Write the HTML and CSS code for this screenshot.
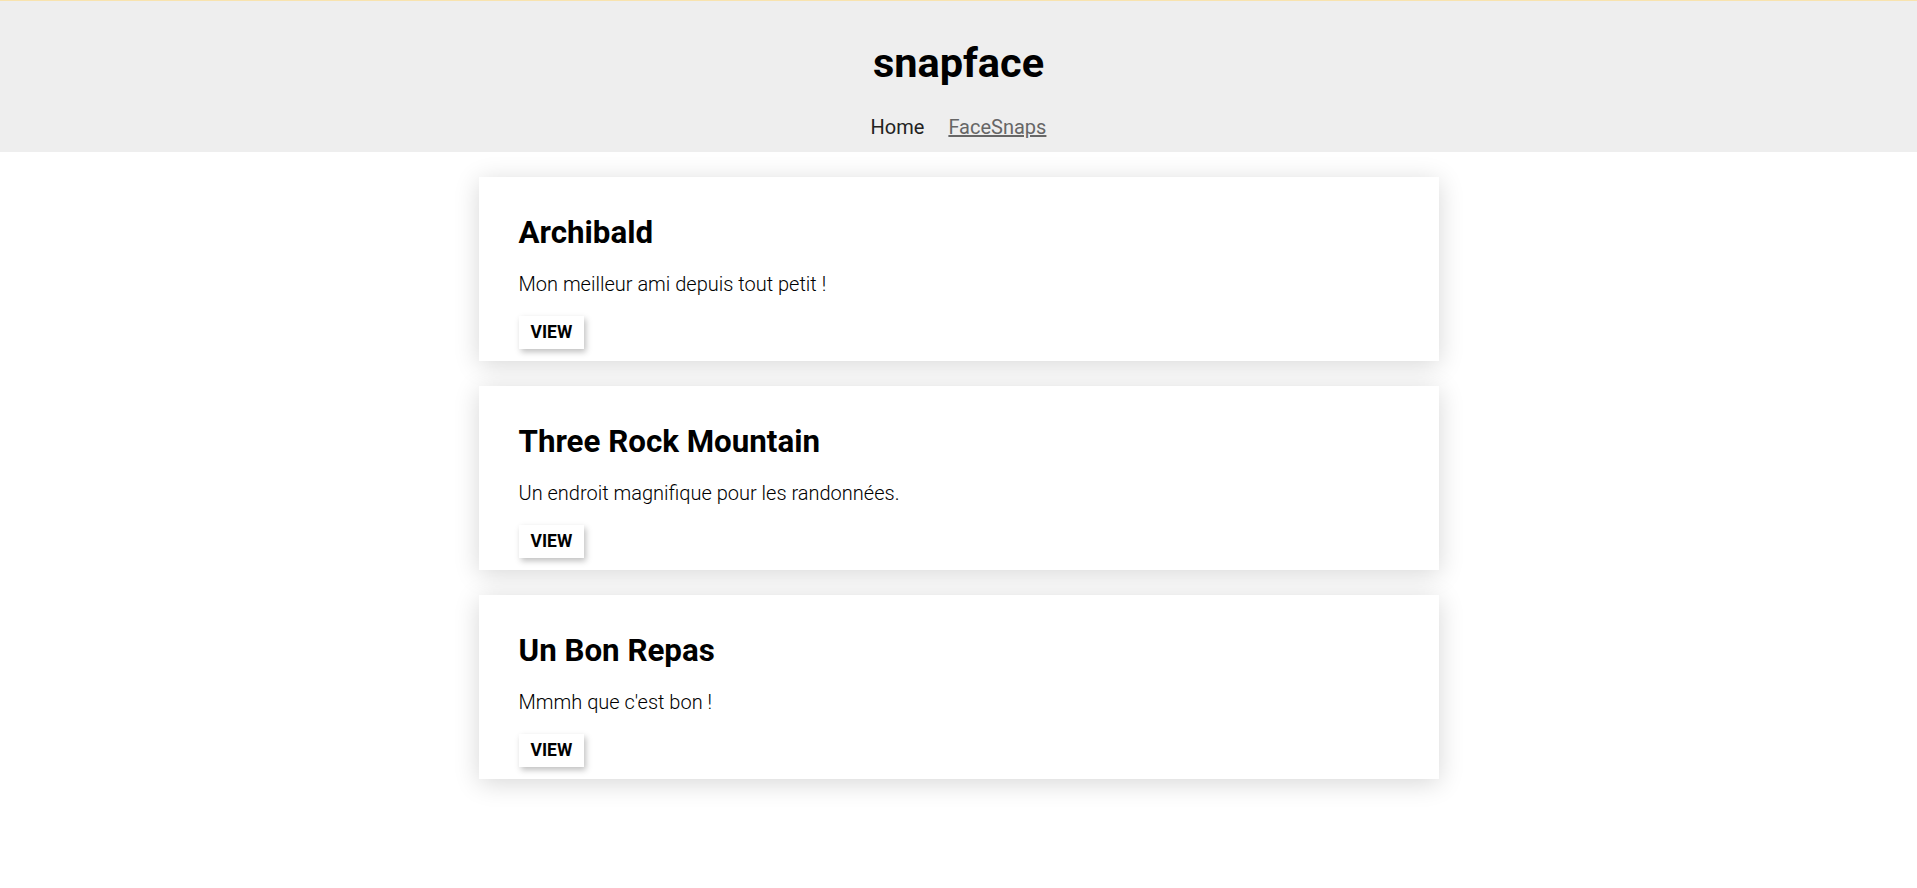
FILE: index.html
```html
<!DOCTYPE html>
<html lang="fr">
<head>
<meta charset="utf-8">
<title>Snapface</title>
<link rel="stylesheet" href="styles.css">
</head>
<body>
<header class="site-header">
  <h1 class="brand">snapface</h1>
  <nav class="nav">
    <a class="nav-link nav-active" href="#">Home</a>
    <a class="nav-link" href="#">FaceSnaps</a>
  </nav>
</header>
<main class="list">
  <section class="card">
    <h2 class="card-title">Archibald</h2>
    <p class="card-text">Mon meilleur ami depuis tout petit !</p>
    <button class="view-btn">VIEW</button>
  </section>
  <section class="card">
    <h2 class="card-title">Three Rock Mountain</h2>
    <p class="card-text">Un endroit magnifique pour les randonnées.</p>
    <button class="view-btn">VIEW</button>
  </section>
  <section class="card">
    <h2 class="card-title">Un Bon Repas</h2>
    <p class="card-text">Mmmh que c'est bon !</p>
    <button class="view-btn">VIEW</button>
  </section>
</main>
</body>
</html>
```
FILE: styles.css
```css
html, body {
  margin: 0;
  padding: 0;
  background: #ffffff;
  font-family: Roboto, "Liberation Sans", Arial, sans-serif;
  color: #000;
}

.site-header {
  background: #eeeeee;
  border-top: 1px solid #f8e3ae;
  height: 152px;
  box-sizing: border-box;
  padding-top: 37px;
  display: flex;
  flex-direction: column;
  align-items: center;
}

.brand {
  margin: 0;
  font-size: 41.5px;
  font-weight: 700;
  line-height: 49px;
}

.nav {
  margin-top: 28.5px;
  display: flex;
  gap: 24px;
  font-size: 20px;
  line-height: 23px;
}

.nav-link {
  color: #666666;
  text-decoration: underline;
}

.nav-active {
  color: #222222;
  text-decoration: none;
}

.list {
  display: flex;
  flex-direction: column;
  align-items: center;
  gap: 25px;
  padding: 25px 0 40px;
}

.card {
  width: 960px;
  box-sizing: border-box;
  background: #fff;
  padding: 37px 40px 12px;
  box-shadow: 0 4px 24px rgba(0, 0, 0, 0.16);
}

.card-title {
  margin: 0 0 21px;
  font-size: 31.3px;
  font-weight: 700;
  line-height: 37px;
}

.card-text {
  margin: 0 0 20px;
  font-size: 20px;
  font-weight: 300;
  line-height: 24px;
}

.view-btn {
  display: block;
  border: none;
  background: #fff;
  font-family: Roboto, "Liberation Sans", Arial, sans-serif;
  font-size: 17.5px;
  font-weight: 700;
  line-height: 21px;
  padding: 6px 12px;
  color: #000;
  box-shadow: 2px 3px 6px rgba(0, 0, 0, 0.25);
  cursor: pointer;
}
```
